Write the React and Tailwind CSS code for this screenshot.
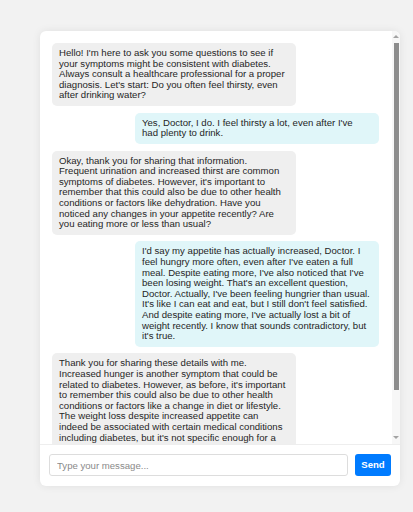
import { useState } from "react";

// Conversation shown in the chat window, kept line by line as it wraps in the design
const MESSAGES = [
    {
        from: "bot",
        lines: [
            "Hello! I'm here to ask you some questions to see if",
            "your symptoms might be consistent with diabetes.",
            "Always consult a healthcare professional for a proper",
            "diagnosis. Let's start: Do you often feel thirsty, even",
            "after drinking water?",
        ],
    },
    {
        from: "user",
        lines: [
            "Yes, Doctor, I do. I feel thirsty a lot, even after I've",
            "had plenty to drink.",
        ],
    },
    {
        from: "bot",
        lines: [
            "Okay, thank you for sharing that information.",
            "Frequent urination and increased thirst are common",
            "symptoms of diabetes. However, it's important to",
            "remember that this could also be due to other health",
            "conditions or factors like dehydration. Have you",
            "noticed any changes in your appetite recently? Are",
            "you eating more or less than usual?",
        ],
    },
    {
        from: "user",
        lines: [
            "I'd say my appetite has actually increased, Doctor. I",
            "feel hungry more often, even after I've eaten a full",
            "meal. Despite eating more, I've also noticed that I've",
            "been losing weight. That's an excellent question,",
            "Doctor. Actually, I've been feeling hungrier than usual.",
            "It's like I can eat and eat, but I still don't feel satisfied.",
            "And despite eating more, I've actually lost a bit of",
            "weight recently. I know that sounds contradictory, but",
            "it's true.",
        ],
    },
    {
        from: "bot",
        lines: [
            "Thank you for sharing these details with me.",
            "Increased hunger is another symptom that could be",
            "related to diabetes. However, as before, it's important",
            "to remember this could also be due to other health",
            "conditions or factors like a change in diet or lifestyle.",
            "The weight loss despite increased appetite can",
            "indeed be associated with certain medical conditions",
            "including diabetes, but it's not specific enough for a",
            "diagnosis. Have you noticed that you need to urinate",
            "more often, especially at night?",
        ],
    },
];

function Bubble({ from, lines }) {
    const isUser = from === "user";

    return (
        <div
            className={`w-[244px] shrink-0 rounded-[5px] px-[7px] py-[5px] text-[9.6px] leading-[10.6px] text-[#1f1f1f] ${
                isUser ? "self-end bg-[#e0f6f9]" : "self-start bg-[#efefef]"
            }`}
        >
            {lines.map((line, i) => (
                <div key={i} className="whitespace-nowrap">
                    {line}
                </div>
            ))}
        </div>
    );
}

// Classic scrollbar with arrows, drawn beside the message list
function FakeScrollbar() {
    return (
        <div className="flex w-[8px] shrink-0 flex-col items-center bg-[#f7f7f7]">
            <div className="mt-[4px] h-0 w-0 border-x-[3px] border-b-[3px] border-x-transparent border-b-[#a3a3a3]" />
            <div className="mt-[5px] h-[347px] w-[5px] bg-[#8d8d8d]" />
            <div className="flex-1" />
            <div className="mb-[5px] h-0 w-0 border-x-[3px] border-t-[3px] border-x-transparent border-t-[#a3a3a3]" />
        </div>
    );
}

export default function App() {
    const [message, setMessage] = useState("");

    return (
        <div
            className="min-h-[512px] bg-[#f2f2f2] pl-[40px] pt-[31px]"
            style={{ fontFamily: '"Liberation Sans", Arial, sans-serif' }}
        >
            <div className="w-[360px] overflow-hidden rounded-[6px] bg-white shadow-[0_0_8px_rgba(0,0,0,0.08)]">
                <div className="flex h-[413px]">
                    <div className="flex flex-1 flex-col gap-[6.7px] overflow-hidden pl-3 pr-[13px] pt-3">
                        {MESSAGES.map((m, i) => (
                            <Bubble key={i} from={m.from} lines={m.lines} />
                        ))}
                    </div>
                    <FakeScrollbar />
                </div>

                <div className="flex gap-[7px] border-t border-[#eeeeee] px-[9px] pb-[10px] pt-[9px]">
                    <input
                        value={message}
                        onChange={(e) => setMessage(e.target.value)}
                        placeholder="Type your message..."
                        className="h-[22px] flex-1 rounded-[3px] border border-[#dddddd] px-[7px] text-[9.6px] text-[#222] placeholder:text-[#8a8a8a] focus:outline-none"
                    />
                    <button className="h-[22px] w-[36px] rounded-[3px] bg-[#007bff] text-[9.6px] font-bold text-white">
                        Send
                    </button>
                </div>
            </div>
        </div>
    );
}
